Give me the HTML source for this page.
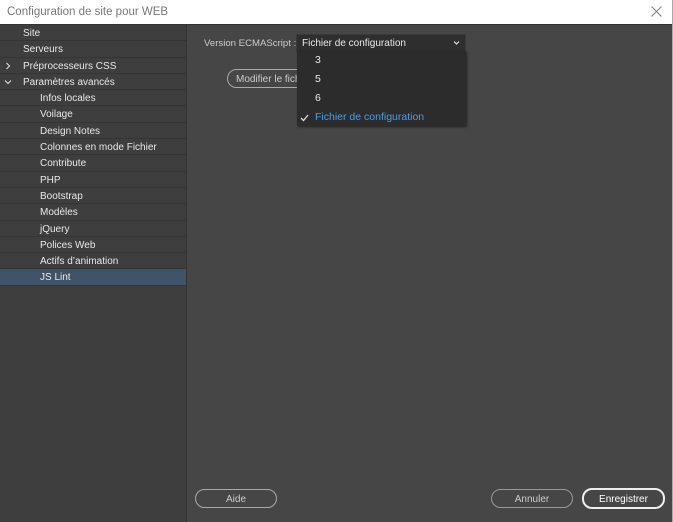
<!DOCTYPE html><html><head><style>
body{margin:0;width:673px;height:522px;overflow:hidden;background:#464646;font-family:"Liberation Sans",sans-serif;font-size:10px;color:#e8e8e8;position:relative}
.title{position:absolute;left:0;top:0;width:672px;height:24px;background:#fff;border-right:1px solid #aaa;color:#777;font-size:11.5px;line-height:25px;text-indent:7px;border-bottom:1px solid #333}
.x{position:absolute;right:10px;top:6px}
.side{position:absolute;left:0;top:25px;width:186px;height:497px;background:#3e3e3e;border-right:1px solid #333}
.row{height:15.3px;border-bottom:1px solid #353535;line-height:17px;padding-left:23px;position:relative}
.row.s{padding-left:40px}
.row.a{background:#3f5468}
.ch{position:absolute;left:4px;top:4px}
.rb{position:absolute;right:0;top:0;width:1px;height:522px;background:#aaa}
.lbl{position:absolute;left:204px;top:38px;color:#ccc;font-size:9.6px}
.sel{position:absolute;left:296px;top:34px;width:168px;height:16px;background:#2e2e2e;border:1px solid #3a3a3a;line-height:17px;text-indent:5px}
.dd{position:absolute;left:297px;top:51px;width:169px;height:75px;background:#2c2c2c;box-shadow:1px 1px 2px #222;font-size:10.5px}
.dd div{position:absolute;left:18px}
.btn{position:absolute;height:17px;border:1px solid #aaa;border-radius:10px;text-align:center;line-height:19px;color:#ccc}
</style></head><body>
<div class="title">Configuration de site pour WEB<svg class="x" width="11" height="11" viewBox="0 0 11 11"><path d="M0.5 0.5L10.5 10.5M10.5 0.5L0.5 10.5" stroke="#888" stroke-width="1.2"/></svg></div>
<div class="side">
<div class="row">Site</div><div class="row">Serveurs</div>
<div class="row"><svg class="ch" width="8" height="8" viewBox="0 0 8 8"><path d="M2.5 1L5.5 4L2.5 7" stroke="#ddd" fill="none" stroke-width="1.1"/></svg>Préprocesseurs CSS</div>
<div class="row"><svg class="ch" width="8" height="8" viewBox="0 0 8 8"><path d="M1 2.5L4 5.5L7 2.5" stroke="#ddd" fill="none" stroke-width="1.1"/></svg>Paramètres avancés</div>
<div class="row s">Infos locales</div><div class="row s">Voilage</div><div class="row s">Design Notes</div><div class="row s">Colonnes en mode Fichier</div><div class="row s">Contribute</div><div class="row s">PHP</div><div class="row s">Bootstrap</div><div class="row s">Modèles</div><div class="row s">jQuery</div><div class="row s">Polices Web</div><div class="row s">Actifs d’animation</div><div class="row s a">JS Lint</div>
</div>
<div class="lbl">Version ECMAScript :</div>
<div class="btn" style="left:227px;top:69px;width:80px;text-align:left;text-indent:8px;overflow:hidden;white-space:nowrap">Modifier le fichier</div>
<div class="sel">Fichier de configuration<svg style="position:absolute;right:5px;top:5px" width="7" height="6" viewBox="0 0 7 6"><path d="M1 1.5L3.5 4L6 1.5" stroke="#ddd" fill="none" stroke-width="1.2"/></svg></div>
<div class="dd"><div style="top:3px">3</div><div style="top:22px">5</div><div style="top:41px">6</div><svg style="position:absolute;left:3px;top:63px" width="9" height="8" viewBox="0 0 9 8"><path d="M1 4L3.5 6.5L8 1" stroke="#ddd" fill="none" stroke-width="1.3"/></svg><div style="top:60px;color:#4a9de8">Fichier de configuration</div></div>
<div class="btn" style="left:195px;top:489px;width:80px">Aide</div>
<div class="btn" style="left:491px;top:489px;width:80px;border-color:#999">Annuler</div>
<div class="btn" style="left:582px;top:488px;width:79px;border:2px solid #eee;color:#fff">Enregistrer</div>
<div class="rb"></div>
</body></html>
